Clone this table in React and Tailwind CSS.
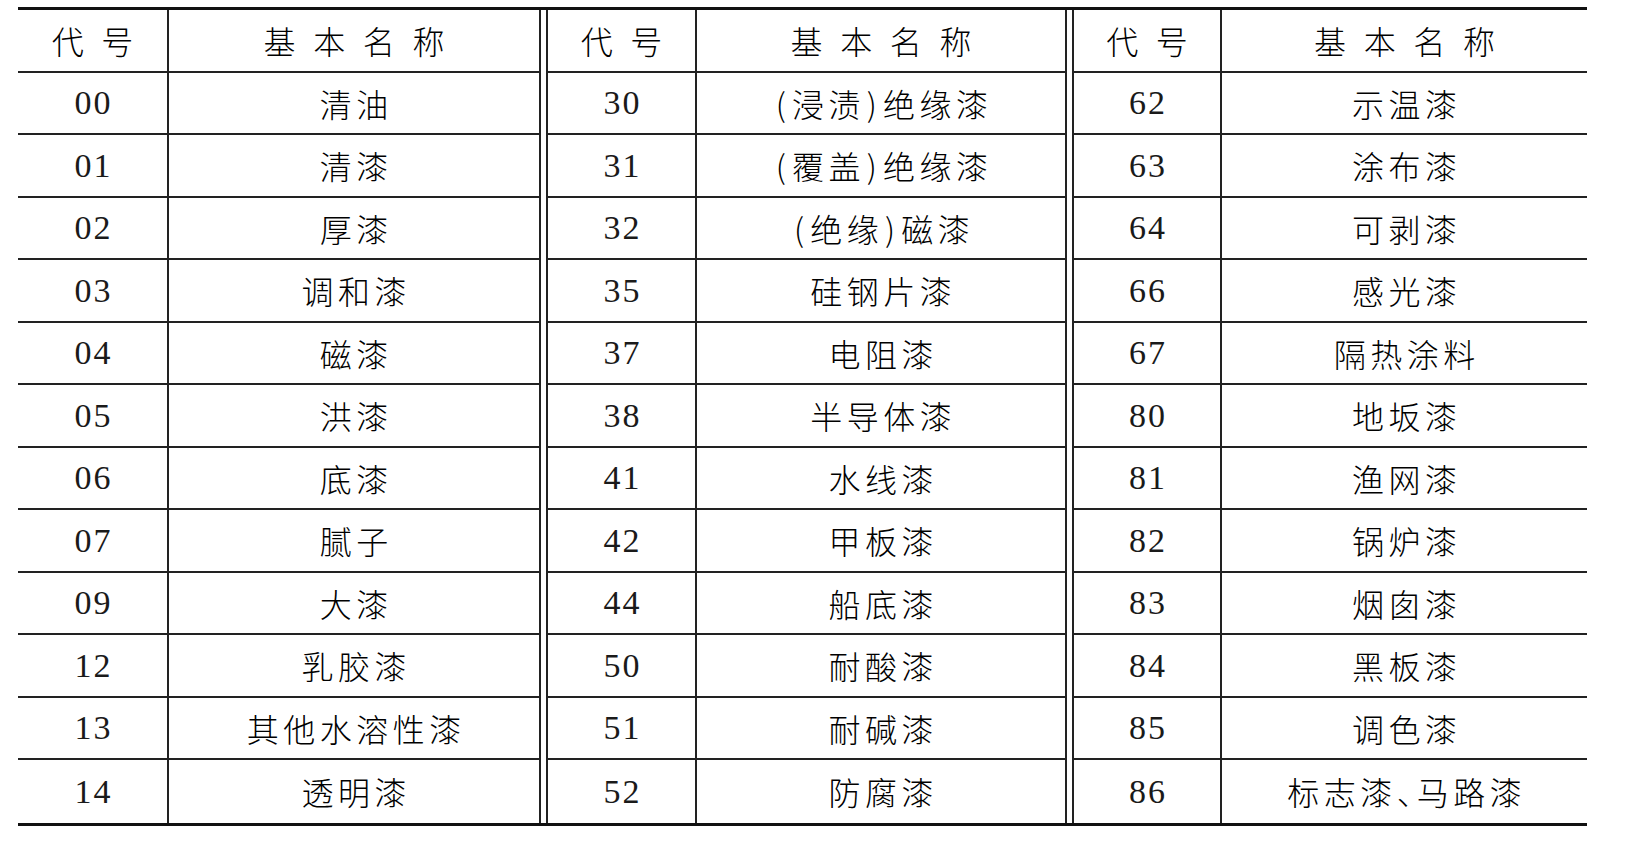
import React from "react";

const groups = [
  {
    width: "w-[523px]",
    codeW: "w-[151px]",
    rows: [
      ["00", "清油"],
      ["01", "清漆"],
      ["02", "厚漆"],
      ["03", "调和漆"],
      ["04", "磁漆"],
      ["05", "洪漆"],
      ["06", "底漆"],
      ["07", "腻子"],
      ["09", "大漆"],
      ["12", "乳胶漆"],
      ["13", "其他水溶性漆"],
      ["14", "透明漆"],
    ],
  },
  {
    width: "w-[521px]",
    codeW: "w-[149px]",
    rows: [
      ["30", "(浸渍)绝缘漆"],
      ["31", "(覆盖)绝缘漆"],
      ["32", "(绝缘)磁漆"],
      ["35", "硅钢片漆"],
      ["37", "电阻漆"],
      ["38", "半导体漆"],
      ["41", "水线漆"],
      ["42", "甲板漆"],
      ["44", "船底漆"],
      ["50", "耐酸漆"],
      ["51", "耐碱漆"],
      ["52", "防腐漆"],
    ],
  },
  {
    width: "w-[515px]",
    codeW: "w-[148px]",
    rows: [
      ["62", "示温漆"],
      ["63", "涂布漆"],
      ["64", "可剥漆"],
      ["66", "感光漆"],
      ["67", "隔热涂料"],
      ["80", "地坂漆"],
      ["81", "渔网漆"],
      ["82", "锅炉漆"],
      ["83", "烟囱漆"],
      ["84", "黑板漆"],
      ["85", "调色漆"],
      ["86", "标志漆、马路漆"],
    ],
  },
];

const cjk = "font-['Noto_Sans_CJK_SC',sans-serif] font-light";
const num = "font-['Liberation_Serif','Noto_Sans_CJK_SC',serif]";

// parens get a bit of room, the enumeration comma is narrower than a full char
const renderName = (name) =>
  name.split("").map((ch, i) => {
    if (ch === "(" || ch === ")")
      return (
        <span key={i} className="inline-block w-[18px] text-center">
          {ch}
        </span>
      );
    if (ch === "、")
      return (
        <span key={i} className="tracking-[-12px]">
          {ch}
        </span>
      );
    return ch;
  });

const Group = ({ group, idx }) => (
  <div
    className={`${group.width} shrink-0 flex flex-col ${
      idx > 0 ? "border-l-2 border-[#222]" : ""
    } ${idx < 2 ? "border-r-2 border-[#222]" : ""}`}
  >
    {/* header */}
    <div className="flex h-[62.5px] border-b-2 border-[#222]">
      <div
        className={`${group.codeW} shrink-0 border-r-2 border-[#222] flex items-center justify-center ${cjk} text-[32px] tracking-[0.55em] pl-[0.55em]`}
      >
        代号
      </div>
      <div
        className={`flex-1 flex items-center justify-center ${cjk} text-[32px] tracking-[0.55em] pl-[0.55em]`}
      >
        基本名称
      </div>
    </div>
    {group.rows.map(([code, name], i) => (
      <div
        key={code}
        className={`flex h-[62.5px] ${
          i < group.rows.length - 1 ? "border-b-2 border-[#222]" : ""
        }`}
      >
        <div
          className={`${group.codeW} shrink-0 border-r-2 border-[#222] flex items-center justify-center ${num} text-[34px] text-[#1a1a1a] tracking-[2px] pl-[2px]`}
        >
          {code}
        </div>
        <div
          className={`flex-1 flex items-center justify-center ${cjk} text-[32px] tracking-[4.5px] pl-[4.5px]`}
        >
          {renderName(name)}
        </div>
      </div>
    ))}
  </div>
);

export default function App() {
  return (
    <div className="w-[1629px] h-[867px] bg-white pl-[18px] pt-[7px] text-black">
      <div className="w-[1569px] border-t-[3px] border-b-[3px] border-[#111] flex gap-[5px]">
        {groups.map((g, i) => (
          <Group key={i} group={g} idx={i} />
        ))}
      </div>
    </div>
  );
}
